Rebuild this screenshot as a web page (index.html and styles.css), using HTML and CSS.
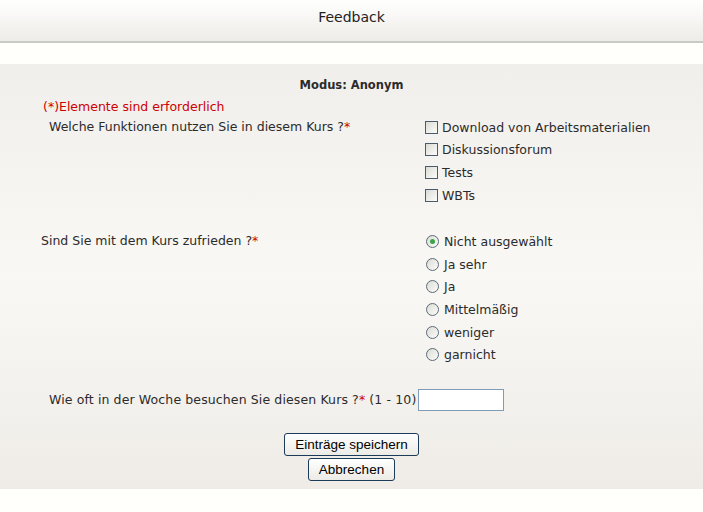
FILE: index.html
```html
<!DOCTYPE html>
<html lang="de">

<head>
    <meta charset="UTF-8">
    <title>Feedback</title>
    <link rel="stylesheet" href="styles.css">
</head>

<body>
    <div class="header">Feedback</div>

    <form class="panel">
        <div class="mode">Modus: Anonym</div>
        <div class="required-note">(*)Elemente sind erforderlich</div>

        <!-- Frage 1 -->
        <div class="question">
            <div class="label label-wide">Welche Funktionen nutzen Sie in diesem Kurs ?<span class="star">*</span></div>
            <div class="options">
                <label class="option"><input type="checkbox" class="check">Download von Arbeitsmaterialien</label>
                <label class="option"><input type="checkbox" class="check">Diskussionsforum</label>
                <label class="option"><input type="checkbox" class="check">Tests</label>
                <label class="option"><input type="checkbox" class="check">WBTs</label>
            </div>
        </div>

        <!-- Frage 2 -->
        <div class="question">
            <div class="label label-narrow">Sind Sie mit dem Kurs zufrieden ?<span class="star">*</span></div>
            <div class="options">
                <label class="option"><input type="radio" name="zufrieden" class="radio" checked>Nicht ausgewählt</label>
                <label class="option"><input type="radio" name="zufrieden" class="radio">Ja sehr</label>
                <label class="option"><input type="radio" name="zufrieden" class="radio">Ja</label>
                <label class="option"><input type="radio" name="zufrieden" class="radio">Mittelmäßig</label>
                <label class="option"><input type="radio" name="zufrieden" class="radio">weniger</label>
                <label class="option"><input type="radio" name="zufrieden" class="radio">garnicht</label>
            </div>
        </div>

        <!-- Frage 3 -->
        <div class="question-inline">
            <span class="inline-text">Wie oft in der Woche besuchen Sie diesen Kurs ?<span class="star">*</span> (1 - 10)</span>
            <input type="text" class="number-input">
        </div>

        <div class="buttons">
            <button type="button" class="btn">Einträge speichern</button>
            <button type="button" class="btn">Abbrechen</button>
        </div>
    </form>
</body>

</html>
```

FILE: styles.css
```css
* {
    margin: 0;
    padding: 0;
    box-sizing: border-box;
}

body {
    background-color: #fffffb;
    font-family: 'DejaVu Sans', Verdana, sans-serif;
    font-size: 12.5px;
    color: #2b2b2b;
}

/* Header */
.header {
    height: 43px;
    padding-top: 9px;
    text-align: center;
    font-size: 14px;
    color: #222;
    background: linear-gradient(#ffffff, #eeece7);
    border-bottom: 2px solid #c9c9c7;
}

/* Form panel */
.panel {
    margin-top: 21px;
    padding: 11px 0 8px;
    background: linear-gradient(#f1efeb, #f9f8f5 50%, #efece7);
}

.mode {
    height: 20px;
    line-height: 20px;
    text-align: center;
    font-weight: bold;
    font-size: 11.5px;
}

.required-note {
    height: 21px;
    line-height: 23px;
    padding-left: 43px;
    color: #cc0000;
}

.star {
    color: #cc0000;
}

.question {
    display: grid;
    grid-template-columns: 425px 1fr;
    margin-bottom: 23px;
}

.question + .question {
    padding-top: 1px;
}

.label {
    line-height: 22.6px;
}

.label-wide {
    padding-left: 49px;
}

.label-narrow {
    padding-left: 41px;
}

.option {
    display: flex;
    align-items: center;
    height: 22.6px;
}

/* Checkbox */
.check {
    appearance: none;
    width: 13px;
    height: 13px;
    margin-right: 4px;
    border: 1px solid #4c5b6b;
    background: linear-gradient(135deg, #dcdcd6, #fbfbf9);
}

/* Radio */
.radio {
    appearance: none;
    width: 13px;
    height: 13px;
    margin: 0 5px 0 1px;
    border: 1px solid #5b6a7a;
    border-radius: 50%;
    background: linear-gradient(135deg, #dcdcd6, #fbfbf9);
    display: grid;
    place-items: center;
}

.radio:checked::after {
    content: "";
    width: 5px;
    height: 5px;
    border-radius: 50%;
    background-color: #3fa34d;
}

.question-inline {
    display: flex;
    align-items: center;
    padding-left: 49px;
    height: 22px;
    margin-top: 22px;
}

.inline-text {
    letter-spacing: 0.12px;
}

.number-input {
    width: 86px;
    height: 22px;
    margin-left: 2px;
    border: 1px solid #7f9db9;
    background-color: #fff;
}

/* Buttons */
.buttons {
    display: flex;
    flex-direction: column;
    align-items: center;
    gap: 2px;
    margin-top: 22px;
}

.btn {
    font-family: 'Liberation Sans', Arial, sans-serif;
    font-size: 13.5px;
    color: #000;
    height: 23px;
    padding: 0 10px;
    border: 1px solid #1c3a5a;
    border-radius: 3px;
    background: linear-gradient(#ffffff, #ecebe6);
}
```
